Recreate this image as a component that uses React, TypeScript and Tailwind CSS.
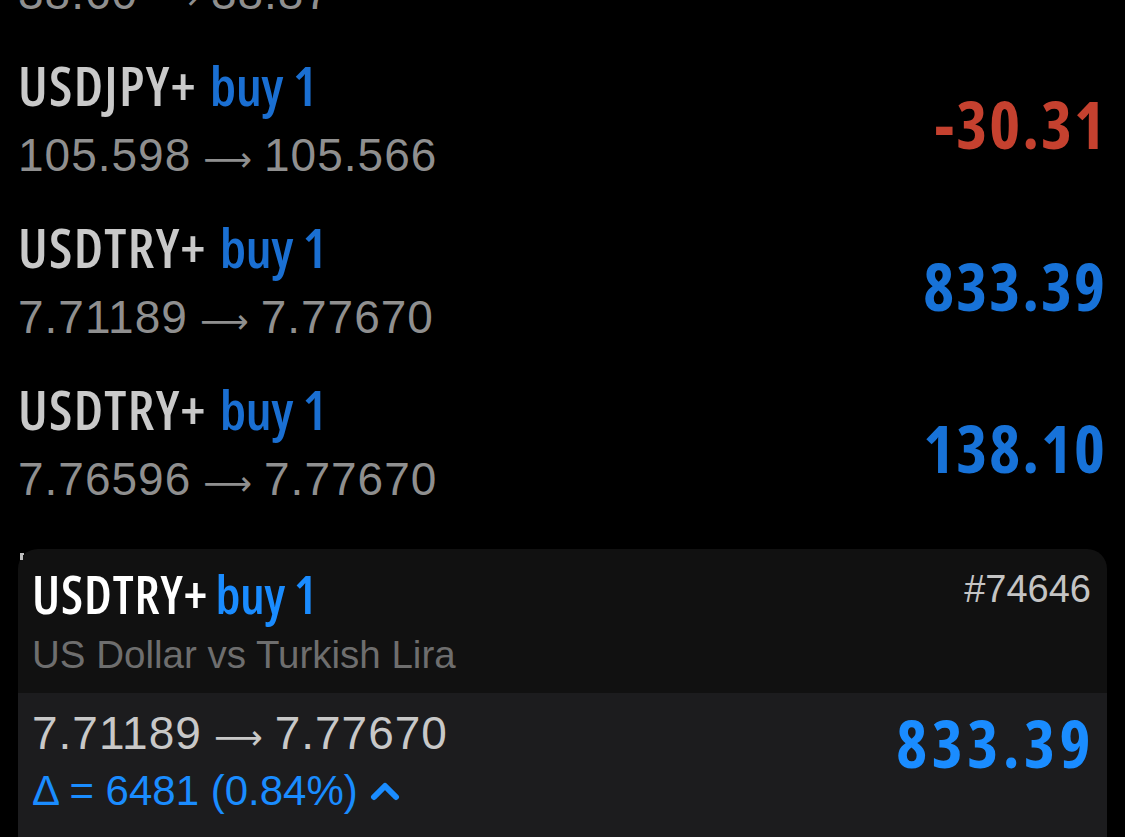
import React from "react";

type Position = {
  symbol: string;
  volume: string;
  open: string;
  close: string;
  profit: string;
  loss?: boolean;
};

const positions: Position[] = [
  { symbol: "USDTRY+", volume: "buy 1", open: "38.60", close: "38.87", profit: "12.04" },
  { symbol: "USDJPY+", volume: "buy 1", open: "105.598", close: "105.566", profit: "-30.31", loss: true },
  { symbol: "USDTRY+", volume: "buy 1", open: "7.71189", close: "7.77670", profit: "833.39" },
  { symbol: "USDTRY+", volume: "buy 1", open: "7.76596", close: "7.77670", profit: "138.10" },
];

const cond = "font-['Open_Sans','DejaVu_Sans_Condensed',sans-serif] [font-stretch:75%] font-semibold";
const profitFont = "font-['Open_Sans','DejaVu_Sans_Condensed',sans-serif] [font-stretch:75%] font-bold";
const plain = "font-['Liberation_Sans',Arial,sans-serif]";

const Arrow = (): React.ReactElement => (
  <span className="mx-[12px] font-['DejaVu_Sans',sans-serif] text-[34px] tracking-normal">⟶</span>
);

const PositionRow = ({ p }: { p: Position }): React.ReactElement => (
  <div className="flex h-[162px] items-center justify-between pl-[18px] pr-[18px]">
    <div className="flex flex-col">
      <div className={`${cond} text-[55px] leading-[64px]`}>
        <span className="tracking-[1.3px] text-[#c9c9c9]">{p.symbol}</span>{" "}
        <span className="ml-[3px] tracking-[-0.5px] text-[#1a6fd2]">{p.volume}</span>
      </div>
      <div className={`${plain} pt-[4px] text-[46px] leading-[68px] tracking-[1px] text-[#8f8f8f]`}>
        {p.open}
        <Arrow />
        {p.close}
      </div>
    </div>
    <div
      className={`${profitFont} text-[66px] leading-none tracking-[2px] ${
        p.loss ? "text-[#c5412f]" : "text-[#1772d8]"
      }`}
    >
      {p.profit}
    </div>
  </div>
);

const App = (): React.ReactElement => {
  return (
    <div className="h-[837px] w-full overflow-hidden bg-black">
      <div className="-mt-[120px]">
        {positions.map((p, i) => (
          <PositionRow key={i} p={p} />
        ))}
      </div>
      <div className="relative mx-[18px] mt-[21px]">
        <span className="absolute left-[2px] top-[4px] z-10 h-[7px] w-[4px] border-l-[3px] border-t-[2px] border-[#bdbdbd]" />
        <div className="overflow-hidden rounded-[20px]">
          <div className="flex h-[144px] justify-between bg-[#111111] pl-[14px] pr-4 pt-[16px]">
            <div className="flex flex-col">
              <div className={`${cond} text-[52px] leading-[58px]`}>
                <span className="tracking-[0.9px] text-white">USDTRY+</span>{" "}
                <span className="-ml-[2px] tracking-[-0.5px] text-[#1a8cff]">buy 1</span>
              </div>
              <div className={`${plain} pt-[7px] text-[38.5px] leading-[50px] text-[#6e6e6e]`}>
                US Dollar vs Turkish Lira
              </div>
            </div>
            <div className={`${plain} -mt-[5px] text-[38px] leading-[58px] text-[#c4c4c4]`}>#74646</div>
          </div>
          <div className="flex h-[180px] justify-between bg-[#1c1c1e] pl-[14px] pr-[12px] pt-[12px]">
            <div className="flex flex-col">
              <div className={`${plain} text-[46px] leading-[56px] tracking-[1px] text-[#c8c8c8]`}>
                7.71189
                <Arrow />
                7.77670
              </div>
              <div className={`${plain} flex items-center gap-3 text-[42px] leading-[52px] text-[#1a8cff]`}>
                <span>Δ = 6481 (0.84%)</span>
                <svg width="30" height="22" viewBox="0 0 30 22" fill="none">
                  <polyline
                    points="4,17 15,6 26,17"
                    stroke="#1a8cff"
                    strokeWidth="6"
                    strokeLinecap="round"
                    strokeLinejoin="round"
                  />
                </svg>
              </div>
            </div>
            <div className={`${profitFont} pt-[4px] text-[66px] leading-none tracking-[4.5px] text-[#1a8cff]`}>
              833.39
            </div>
          </div>
        </div>
      </div>
    </div>
  );
};

export default App;
